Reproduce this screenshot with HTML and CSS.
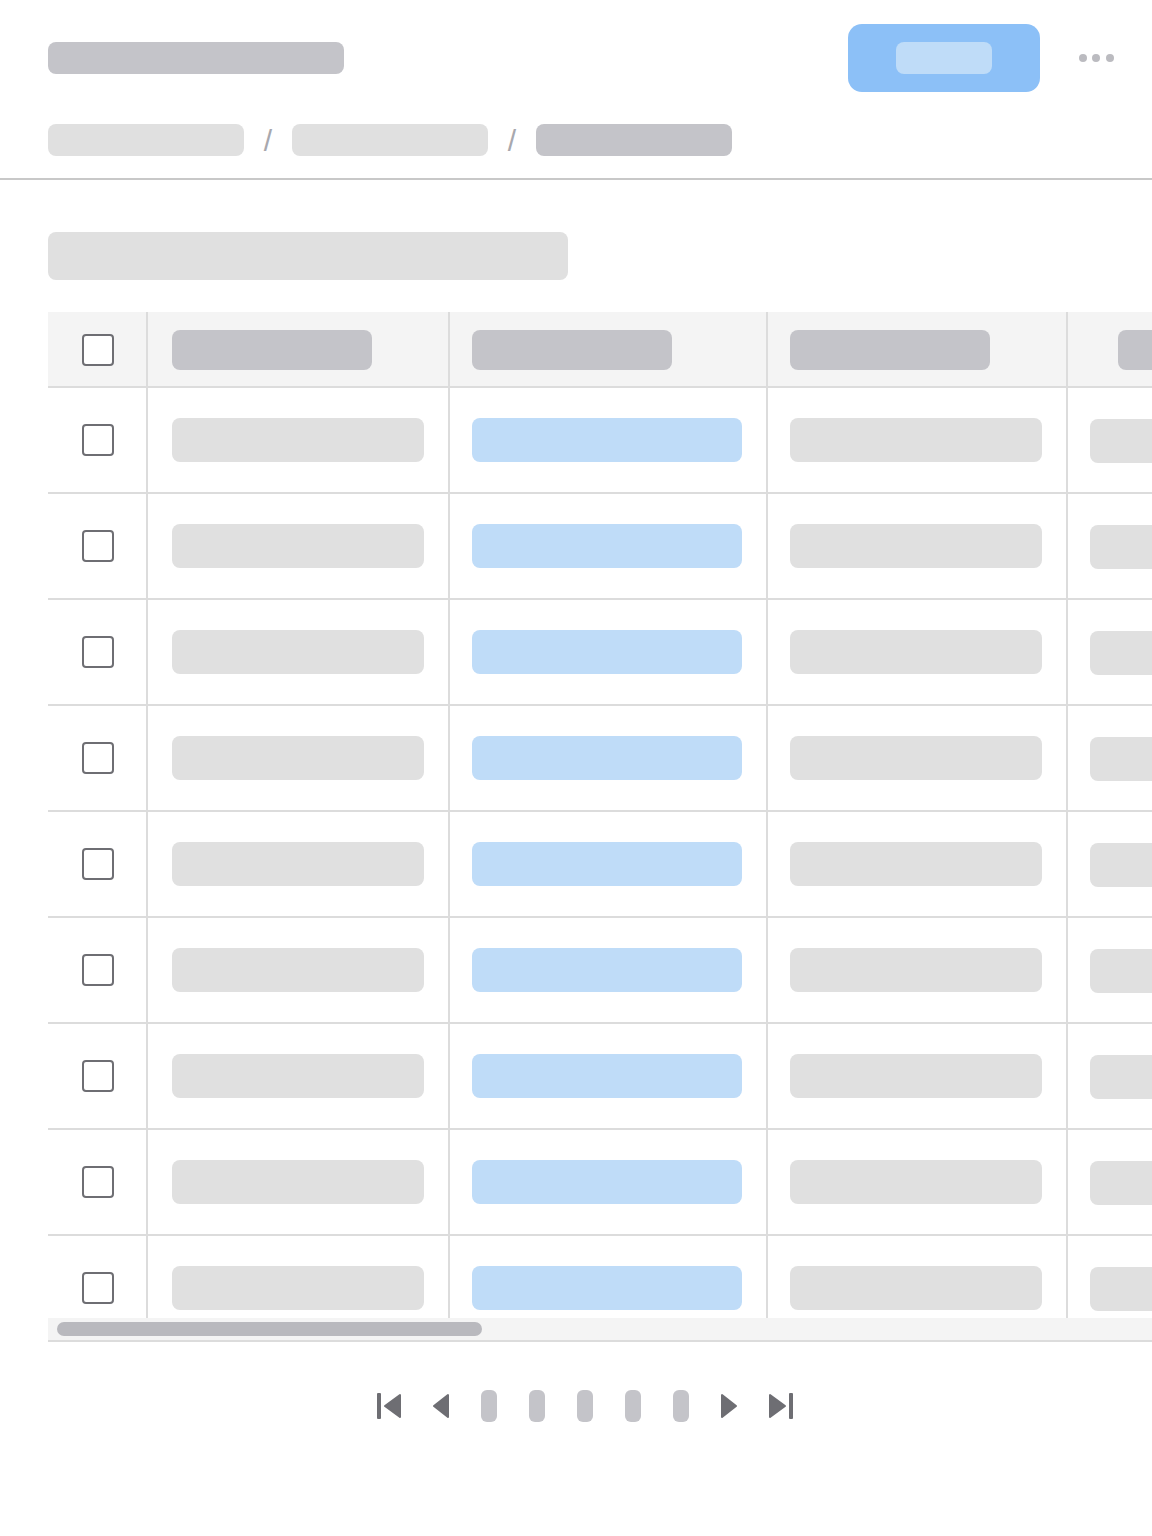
FILE: index.html
```html
<!DOCTYPE html>
<html lang="en">
<head>
<meta charset="utf-8">
<title>List</title>
<link rel="stylesheet" href="styles.css">
</head>
<body>
<header class="page-header">
  <div class="top-row">
    <div class="sk sk-title"></div>
    <div class="actions">
      <button class="primary-btn"><span class="sk sk-btn-label"></span></button>
      <button class="more-btn" aria-label="More"><span class="dot"></span><span class="dot"></span><span class="dot"></span></button>
    </div>
  </div>
  <nav class="breadcrumb">
    <span class="sk sk-crumb"></span>
    <span class="sep">/</span>
    <span class="sk sk-crumb"></span>
    <span class="sep">/</span>
    <span class="sk sk-crumb current"></span>
  </nav>
</header>

<main class="content">
  <div class="sk sk-search"></div>

  <div class="table-wrap">
    <div class="table-view">
      <div class="table">
        <div class="row head">
          <div class="cell c1"><span class="checkbox"></span></div>
          <div class="cell c2"><span class="sk sk-head"></span></div>
          <div class="cell c3"><span class="sk sk-head"></span></div>
          <div class="cell c4"><span class="sk sk-head"></span></div>
          <div class="cell c5 head5"><span class="sk sk-head"></span></div>
        </div>
        <div class="row"><div class="cell c1"><span class="checkbox"></span></div><div class="cell c2"><span class="sk sk-cell"></span></div><div class="cell c3"><span class="sk sk-cell blue"></span></div><div class="cell c4"><span class="sk sk-cell"></span></div><div class="cell c5"><span class="sk sk-cell off"></span></div></div>
        <div class="row"><div class="cell c1"><span class="checkbox"></span></div><div class="cell c2"><span class="sk sk-cell"></span></div><div class="cell c3"><span class="sk sk-cell blue"></span></div><div class="cell c4"><span class="sk sk-cell"></span></div><div class="cell c5"><span class="sk sk-cell off"></span></div></div>
        <div class="row"><div class="cell c1"><span class="checkbox"></span></div><div class="cell c2"><span class="sk sk-cell"></span></div><div class="cell c3"><span class="sk sk-cell blue"></span></div><div class="cell c4"><span class="sk sk-cell"></span></div><div class="cell c5"><span class="sk sk-cell off"></span></div></div>
        <div class="row"><div class="cell c1"><span class="checkbox"></span></div><div class="cell c2"><span class="sk sk-cell"></span></div><div class="cell c3"><span class="sk sk-cell blue"></span></div><div class="cell c4"><span class="sk sk-cell"></span></div><div class="cell c5"><span class="sk sk-cell off"></span></div></div>
        <div class="row"><div class="cell c1"><span class="checkbox"></span></div><div class="cell c2"><span class="sk sk-cell"></span></div><div class="cell c3"><span class="sk sk-cell blue"></span></div><div class="cell c4"><span class="sk sk-cell"></span></div><div class="cell c5"><span class="sk sk-cell off"></span></div></div>
        <div class="row"><div class="cell c1"><span class="checkbox"></span></div><div class="cell c2"><span class="sk sk-cell"></span></div><div class="cell c3"><span class="sk sk-cell blue"></span></div><div class="cell c4"><span class="sk sk-cell"></span></div><div class="cell c5"><span class="sk sk-cell off"></span></div></div>
        <div class="row"><div class="cell c1"><span class="checkbox"></span></div><div class="cell c2"><span class="sk sk-cell"></span></div><div class="cell c3"><span class="sk sk-cell blue"></span></div><div class="cell c4"><span class="sk sk-cell"></span></div><div class="cell c5"><span class="sk sk-cell off"></span></div></div>
        <div class="row"><div class="cell c1"><span class="checkbox"></span></div><div class="cell c2"><span class="sk sk-cell"></span></div><div class="cell c3"><span class="sk sk-cell blue"></span></div><div class="cell c4"><span class="sk sk-cell"></span></div><div class="cell c5"><span class="sk sk-cell off"></span></div></div>
        <div class="row"><div class="cell c1"><span class="checkbox"></span></div><div class="cell c2"><span class="sk sk-cell"></span></div><div class="cell c3"><span class="sk sk-cell blue"></span></div><div class="cell c4"><span class="sk sk-cell"></span></div><div class="cell c5"><span class="sk sk-cell off"></span></div></div>
      </div>
    </div>
    <div class="hscroll"><span class="thumb"></span></div>
  </div>

  <nav class="pager">
    <svg class="pg-icon first" width="24" height="26" viewBox="0 0 24 26"><rect x="0" y="0" width="4" height="26" rx="1"/><polygon points="8,13 23,2 23,24" stroke-linejoin="round" stroke-width="2"/></svg>
    <svg class="pg-icon prev" width="16" height="26" viewBox="0 0 16 26"><polygon points="1,13 15,2 15,24" stroke-linejoin="round" stroke-width="2"/></svg>
    <span class="page"></span>
    <span class="page"></span>
    <span class="page"></span>
    <span class="page"></span>
    <span class="page"></span>
    <svg class="pg-icon next" width="16" height="26" viewBox="0 0 16 26"><polygon points="15,13 1,2 1,24" stroke-linejoin="round" stroke-width="2"/></svg>
    <svg class="pg-icon last" width="24" height="26" viewBox="0 0 24 26"><polygon points="16,13 1,2 1,24" stroke-linejoin="round" stroke-width="2"/><rect x="20" y="0" width="4" height="26" rx="1"/></svg>
  </nav>
</main>
</body>
</html>
```

FILE: styles.css
```css
* { box-sizing: border-box; }

html, body {
  margin: 0;
  padding: 0;
  background: #ffffff;
  font-family: "Liberation Sans", Arial, sans-serif;
}

.sk {
  display: block;
  border-radius: 8px;
  background: #e0e0e0;
}

/* Header */
.page-header {
  padding: 24px 32px 22px 48px;
  border-bottom: 2px solid #c8c8c8;
}

.top-row {
  display: flex;
  align-items: center;
  justify-content: space-between;
  height: 68px;
}

.sk-title {
  width: 296px;
  height: 32px;
  background: #c4c4c9;
}

.actions {
  display: flex;
  align-items: center;
  gap: 32px;
}

.primary-btn {
  width: 192px;
  height: 68px;
  border: 0;
  border-radius: 14px;
  background: #8cc0f7;
  display: flex;
  align-items: center;
  justify-content: center;
  padding: 0;
}

.sk-btn-label {
  width: 96px;
  height: 32px;
  background: #bfdcf8;
}

.more-btn {
  width: 48px;
  height: 48px;
  border: 0;
  background: transparent;
  display: flex;
  align-items: center;
  justify-content: center;
  gap: 5.5px;
  padding: 0;
}

.dot {
  width: 8px;
  height: 8px;
  border-radius: 50%;
  background: #bbbbc0;
}

.breadcrumb {
  display: flex;
  align-items: center;
  margin-top: 32px;
  height: 32px;
}

.sk-crumb {
  width: 196px;
  height: 32px;
}

.sk-crumb.current {
  background: #c4c4c9;
}

.sep {
  width: 48px;
  text-align: center;
  font-size: 30px;
  line-height: 32px;
  color: #a8a8ae;
  padding-top: 2px;
}

/* Content */
.content {
  padding-top: 52px;
}

.sk-search {
  margin-left: 48px;
  width: 520px;
  height: 48px;
}

.table-wrap {
  margin-top: 32px;
  margin-left: 48px;
  border-bottom: 2px solid #dcdcdc;
  overflow: hidden;
}

.table-view {
  height: 1006px;
  overflow: hidden;
}

.table {
  width: 1400px;
}

.row {
  display: flex;
  height: 106px;
  border-bottom: 2px solid #dcdcdc;
}

.row.head {
  height: 76px;
  background: #f4f4f4;
  padding-top: 2px;
}

.cell {
  display: flex;
  align-items: center;
}

.c1 {
  width: 98px;
  padding-left: 34px;
}

.c2 {
  width: 302px;
  border-left: 2px solid #dcdcdc;
  padding-left: 24px;
}

.c3 {
  width: 318px;
  border-left: 2px solid #dcdcdc;
  padding-left: 22px;
}

.c4 {
  width: 300px;
  border-left: 2px solid #dcdcdc;
  padding-left: 22px;
}

.c5 {
  width: 380px;
  border-left: 2px solid #dcdcdc;
  padding-left: 22px;
}

.c5.head5 {
  padding-left: 50px;
}

.row.head .cell {
  margin-top: -2px;
  padding-top: 2px;
}

.checkbox {
  display: block;
  width: 32px;
  height: 32px;
  border: 2px solid #6e6e73;
  border-radius: 4px;
  background: #ffffff;
}

.sk-head {
  width: 200px;
  height: 40px;
  background: #c4c4c9;
}

.sk-cell {
  width: 252px;
  height: 44px;
}

.c3 .sk-cell {
  width: 270px;
}

.sk-cell.blue {
  background: #bfdcf8;
}

.sk-cell.off {
  margin-top: 2px;
}

.hscroll {
  height: 22px;
  background: #f4f4f4;
  padding: 4px 0 0 9px;
}

.thumb {
  display: block;
  width: 425px;
  height: 14px;
  border-radius: 7px;
  background: #b9b9be;
}

/* Pager */
.pager {
  display: flex;
  align-items: center;
  justify-content: center;
  gap: 32px;
  margin-top: 48px;
  height: 32px;
  padding-left: 18px;
}

.pg-icon {
  display: block;
  fill: #6e6e73;
  stroke: #6e6e73;
}

.pg-icon rect {
  stroke: none;
}

.page {
  display: block;
  width: 16px;
  height: 32px;
  border-radius: 6px;
  background: #c4c4c9;
}
```
